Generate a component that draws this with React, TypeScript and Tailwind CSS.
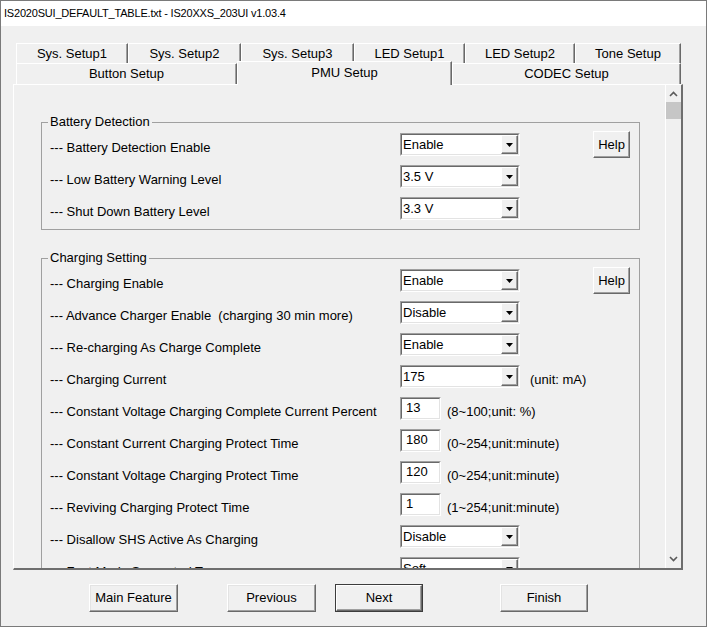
import React from "react";

const FONT = { fontFamily: '"Liberation Sans", Arial, sans-serif' };

function DropBtn() {
  return (
    <div className="flex h-full w-[17px] items-center justify-center border border-t-white border-l-white border-r-[#696969] border-b-[#696969] bg-[#f0f0f0] shadow-[inset_-1px_-1px_0_#a0a0a0]">
      <svg width="7" height="4" viewBox="0 0 7 4">
        <polygon points="0,0 7,0 3.5,4" fill="#000" />
      </svg>
    </div>
  );
}

function Combo({ value }: { value: string }) {
  return (
    <div className="mt-[2px] flex h-[23px] w-[120px] shrink-0 border border-t-[#a0a0a0] border-l-[#a0a0a0] border-r-white border-b-white">
      <div className="flex flex-1 border border-t-[#696969] border-l-[#696969] border-r-[#e3e3e3] border-b-[#e3e3e3] bg-white">
        <span className="flex-1 pl-[1px] pt-[1px] leading-[18px] text-black">{value}</span>
        <DropBtn />
      </div>
    </div>
  );
}

function TextBox({ value }: { value: string }) {
  return (
    <div className="mt-[2px] flex h-[23px] w-[41px] shrink-0 border border-t-[#a0a0a0] border-l-[#a0a0a0] border-r-white border-b-white">
      <div className="flex-1 border border-t-[#696969] border-l-[#696969] border-r-[#e3e3e3] border-b-[#e3e3e3] bg-white pl-[4px] pt-[1px] leading-[15px] text-black">
        {value}
      </div>
    </div>
  );
}

function HelpBtn() {
  return (
    <div className="ml-[73px] flex h-[27px] w-[37px] shrink-0 items-center justify-center border border-t-white border-l-white border-r-[#696969] border-b-[#696969] bg-[#f0f0f0] shadow-[inset_-1px_-1px_0_#a0a0a0] text-black">
      Help
    </div>
  );
}

function Label({ text }: { text: string }) {
  return (
    <div className="w-[350px] shrink-0 whitespace-pre pt-[9px] leading-[15px] text-black">
      {text}
    </div>
  );
}

function Unit({ text, ml }: { text: string; ml: string }) {
  return (
    <div className={`${ml} whitespace-nowrap pt-[9px] leading-[15px] text-black`}>{text}</div>
  );
}

function Row({ children }: { children: React.ReactNode }) {
  return <div className="flex h-[32px] shrink-0 items-start">{children}</div>;
}

function Group({
  title,
  children,
  className,
}: {
  title: string;
  children: React.ReactNode;
  className?: string;
}) {
  return (
    <div
      className={`relative w-[599px] shrink-0 border border-[#a0a0a0] pl-[8px] pt-[8px] ${className ?? ""}`}
    >
      <span className="absolute -top-[9px] left-[6px] bg-[#f0f0f0] px-[2px] leading-[15px] text-black">
        {title}
      </span>
      {children}
    </div>
  );
}

function Tab({ label, w }: { label: string; w: string }) {
  return (
    <div
      className={`${w} flex h-full shrink-0 items-center justify-center border-l border-t border-l-white border-t-white border-r border-r-[#696969] shadow-[inset_-1px_0_0_#a0a0a0] text-black`}
    >
      {label}
    </div>
  );
}

function WinButton({
  label,
  w,
  ml,
  isDefault,
}: {
  label: string;
  w: string;
  ml: string;
  isDefault?: boolean;
}) {
  if (isDefault) {
    return (
      <div className={`${w} ${ml} h-[28px] shrink-0 border border-[#3c3c3c]`}>
        <div className="flex h-full items-center justify-center border border-t-white border-l-white border-r-[#696969] border-b-[#696969] bg-[#f0f0f0] shadow-[inset_-1px_-1px_0_#a0a0a0] text-black">
          {label}
        </div>
      </div>
    );
  }
  return (
    <div
      className={`${w} ${ml} flex h-[28px] shrink-0 items-center justify-center border border-t-white border-l-white border-r-[#696969] border-b-[#696969] bg-[#f0f0f0] shadow-[inset_-1px_-1px_0_#a0a0a0,inset_1px_1px_0_#e3e3e3] text-black`}
    >
      {label}
    </div>
  );
}

function Chevron({ up }: { up?: boolean }) {
  return (
    <svg width="9" height="6" viewBox="0 0 9 6">
      {up ? (
        <polyline points="1,5 4.5,1.5 8,5" fill="none" stroke="#5a5a5a" strokeWidth="1.6" />
      ) : (
        <polyline points="1,1 4.5,4.5 8,1" fill="none" stroke="#5a5a5a" strokeWidth="1.6" />
      )}
    </svg>
  );
}

export default function App() {
  return (
    <div
      className="flex h-[627px] w-[707px] flex-col overflow-hidden border border-[#7a7a7a] bg-[#f0f0f0] text-[13px]"
      style={FONT}
    >
      {/* Title bar */}
      <div className="flex h-[25px] shrink-0 items-center bg-white pl-[3px] text-[11px] tracking-[-0.2px] text-black">
        IS2020SUI_DEFAULT_TABLE.txt - IS20XXS_203UI v1.03.4
      </div>

      {/* Tabs row 1 */}
      <div className="ml-[15px] mt-[17px] flex h-[20px] shrink-0">
        <Tab label="Sys. Setup1" w="w-[112px]" />
        <Tab label="Sys. Setup2" w="w-[113px]" />
        <Tab label="Sys. Setup3" w="w-[113px]" />
        <Tab label="LED Setup1" w="w-[111px]" />
        <Tab label="LED Setup2" w="w-[110px]" />
        <Tab label="Tone Setup" w="w-[106px]" />
      </div>
      {/* Tabs row 2 */}
      <div className="ml-[15px] flex h-[21px] shrink-0">
        <Tab label="Button Setup" w="w-[221px]" />
        <div className="relative z-10 -mt-[2px] flex h-[24px] w-[215px] shrink-0 items-center justify-center border-l border-t border-l-white border-t-white border-r border-r-[#696969] bg-[#f0f0f0] pb-[1px] shadow-[inset_-1px_0_0_#a0a0a0] text-black">
          PMU Setup
        </div>
        <Tab label="CODEC Setup" w="w-[229px]" />
      </div>

      {/* Panel */}
      <div className="ml-[12px] flex h-[486px] w-[670px] shrink-0 border-l border-t border-l-white border-t-white border-r-2 border-b-2 border-r-[#6e6e6e] border-b-[#6e6e6e]">
        <div className="flex h-full flex-1 flex-col overflow-hidden pl-[27px] pt-[37px]">
          <Group title="Battery Detection" className="h-[108px]">
            <Row>
              <Label text="--- Battery Detection Enable" />
              <Combo value="Enable" />
              <HelpBtn />
            </Row>
            <Row>
              <Label text="--- Low Battery Warning Level" />
              <Combo value="3.5 V" />
            </Row>
            <Row>
              <Label text="--- Shut Down Battery Level" />
              <Combo value="3.3 V" />
            </Row>
          </Group>

          <Group title="Charging Setting" className="mt-[28px]">
            <Row>
              <Label text="--- Charging Enable" />
              <Combo value="Enable" />
              <HelpBtn />
            </Row>
            <Row>
              <Label text="--- Advance Charger Enable  (charging 30 min more)" />
              <Combo value="Disable" />
            </Row>
            <Row>
              <Label text="--- Re-charging As Charge Complete" />
              <Combo value="Enable" />
            </Row>
            <Row>
              <Label text="--- Charging Current" />
              <Combo value="175" />
              <Unit text="(unit: mA)" ml="ml-[10px]" />
            </Row>
            <Row>
              <Label text="--- Constant Voltage Charging Complete Current Percent" />
              <TextBox value="13" />
              <Unit text="(8~100;unit: %)" ml="ml-[6px]" />
            </Row>
            <Row>
              <Label text="--- Constant Current Charging Protect Time" />
              <TextBox value="180" />
              <Unit text="(0~254;unit:minute)" ml="ml-[6px]" />
            </Row>
            <Row>
              <Label text="--- Constant Voltage Charging Protect Time" />
              <TextBox value="120" />
              <Unit text="(0~254;unit:minute)" ml="ml-[6px]" />
            </Row>
            <Row>
              <Label text="--- Reviving Charging Protect Time" />
              <TextBox value="1" />
              <Unit text="(1~254;unit:minute)" ml="ml-[6px]" />
            </Row>
            <Row>
              <Label text="--- Disallow SHS Active As Charging" />
              <Combo value="Disable" />
            </Row>
            <Row>
              <Label text="--- Fast Mode Supported Type" />
              <Combo value="Soft" />
            </Row>
          </Group>
        </div>

        {/* Scrollbar */}
        <div className="flex h-full w-[16px] shrink-0 flex-col border-l border-l-white">
          <div className="flex h-[17px] items-center justify-center pt-[1px]">
            <Chevron up />
          </div>
          <div className="h-[17px] bg-[#c6c6c6]" />
          <div className="flex-1" />
          <div className="flex h-[16px] items-center justify-center pb-[2px]">
            <Chevron />
          </div>
        </div>
      </div>

      {/* Bottom buttons */}
      <div className="mt-[14px] flex shrink-0">
        <WinButton label="Main Feature" w="w-[89px]" ml="ml-[88px]" />
        <WinButton label="Previous" w="w-[89px]" ml="ml-[49px]" />
        <WinButton label="Next" w="w-[88px]" ml="ml-[19px]" isDefault />
        <WinButton label="Finish" w="w-[88px]" ml="ml-[77px]" />
      </div>
    </div>
  );
}
